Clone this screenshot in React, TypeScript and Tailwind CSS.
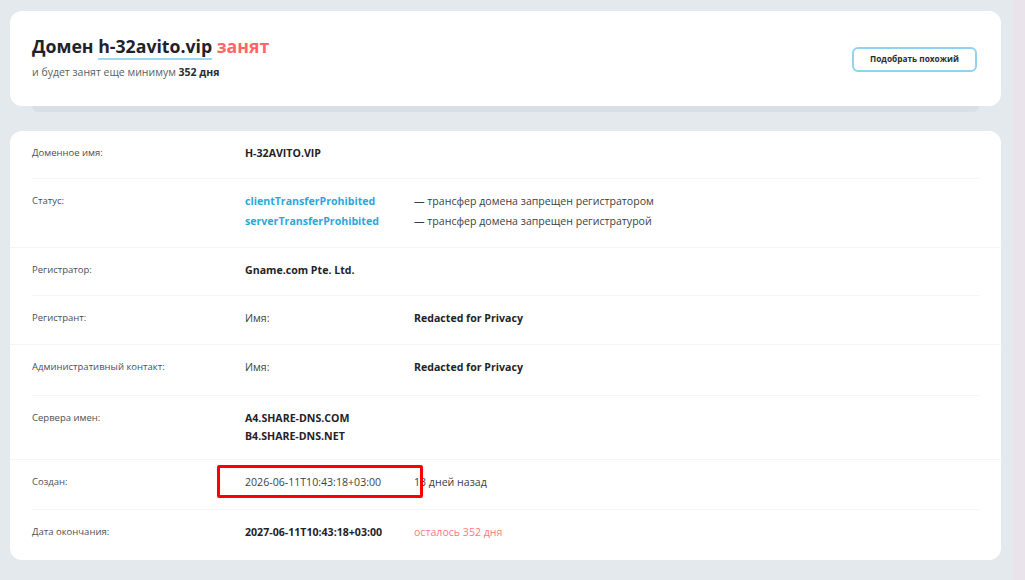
import React from "react";

const font = { fontFamily: '"Open Sans", "Noto Sans", sans-serif' };

function Row({
  label,
  children,
  h,
  sep,
}: {
  label: string;
  children: React.ReactNode;
  h: string;
  sep: "inset" | "full" | "none";
}) {
  return (
    <div className="relative">
      <div className={`flex items-start pt-[13px] ${h}`}>
        <div className="w-[235px] shrink-0 pl-[22px] text-[9.5px] leading-[18px] text-[#4a4f55]">{label}</div>
        <div className="flex-1">{children}</div>
      </div>
      {sep === "inset" && <div className="mx-[22px] h-px bg-[#f3f5f7]" />}
      {sep === "full" && <div className="h-px bg-[#f3f5f7]" />}
    </div>
  );
}

export default function App() {
  return (
    <div style={font} className="flex h-[580px] w-[1025px] overflow-hidden bg-[#e4e9ed]">
      <div className="flex w-[1013px] flex-col pl-[10px] pr-[12px] pt-[11px]">
        {/* header card */}
        <div className="relative">
          <div className="relative z-10 flex h-[95px] items-center justify-between rounded-[12px] bg-white pl-[22px] pr-[24px]">
            <div className="-mt-[4px]">
              <div className="text-[17.7px] font-bold leading-[24px] text-[#1f2329]">
                Домен{" "}
                <span className="border-b-[2px] border-[#9fd8ef]">h-32avito.vip</span>{" "}
                <span className="text-[#ff6767]">занят</span>
              </div>
              <div className="mt-[7px] text-[10.5px] leading-[14px] text-[#5a5f66]">
                и будет занят еще минимум <span className="font-bold text-[#2a2e33]">352 дня</span>
              </div>
            </div>
            <button className="mt-[2px] flex h-[25px] w-[125px] items-center justify-center rounded-[6px] border-[2px] border-[#8fd3ef] bg-white text-[8.3px] font-bold text-[#2a2e33]">
              Подобрать похожий
            </button>
          </div>
          <div className="mx-[22px] h-[6px] rounded-b-[6px] bg-[#d8dfe5]" />
        </div>

        {/* details card */}
        <div className="relative mt-[19px] rounded-[12px] bg-white">
          <Row label="Доменное имя:" h="h-[47px]" sep="inset">
            <div className="text-[10.6px] font-bold leading-[18px] text-[#1f2329]">H-32AVITO.VIP</div>
          </Row>
          <Row label="Статус:" h="h-[68px]" sep="full">
            <div className="flex flex-col gap-[2px] text-[10.6px] leading-[18px]">
              <div className="flex">
                <span className="w-[169px] font-bold text-[#2ba7dc]">clientTransferProhibited</span>
                <span className="text-[#3a3f45]">— трансфер домена запрещен регистратором</span>
              </div>
              <div className="flex">
                <span className="w-[169px] font-bold text-[#2ba7dc]">serverTransferProhibited</span>
                <span className="text-[#3a3f45]">— трансфер домена запрещен регистратурой</span>
              </div>
            </div>
          </Row>
          <Row label="Регистратор:" h="h-[47px]" sep="inset">
            <div className="text-[10.6px] font-bold leading-[18px] text-[#1f2329]">Gname.com Pte. Ltd.</div>
          </Row>
          <Row label="Регистрант:" h="h-[48px]" sep="full">
            <div className="flex text-[10.6px] leading-[18px]">
              <span className="w-[169px] text-[#3a3f45]">Имя:</span>
              <span className="font-bold text-[#1f2329]">Redacted for Privacy</span>
            </div>
          </Row>
          <Row label="Административный контакт:" h="h-[50px]" sep="inset">
            <div className="flex text-[10.6px] leading-[18px]">
              <span className="w-[169px] text-[#3a3f45]">Имя:</span>
              <span className="font-bold text-[#1f2329]">Redacted for Privacy</span>
            </div>
          </Row>
          <Row label="Сервера имен:" h="h-[63px]" sep="full">
            <div className="text-[10.6px] font-bold leading-[18px] text-[#1f2329]">
              <div>A4.SHARE-DNS.COM</div>
              <div>B4.SHARE-DNS.NET</div>
            </div>
          </Row>
          <Row label="Создан:" h="h-[49px]" sep="inset">
            <div className="relative flex text-[10.6px] leading-[18px]">
              <span className="w-[169px] text-[#3a3f45]">2026-06-11T10:43:18+03:00</span>
              <span className="text-[#3a3f45]">13 дней назад</span>
              <div className="absolute left-[-28px] top-[-8px] h-[33px] w-[206px] rounded-[2px] border-[3px] border-[#ff0000]" />
            </div>
          </Row>
          <Row label="Дата окончания:" h="h-[50px]" sep="none">
            <div className="flex text-[10.6px] leading-[18px]">
              <span className="w-[169px] font-bold text-[#1f2329]">2027-06-11T10:43:18+03:00</span>
              <span className="text-[#ff7a7a]">осталось 352 дня</span>
            </div>
          </Row>
        </div>
      </div>
      <div className="h-full w-[12px] bg-[#ebe3ec]" />
    </div>
  );
}
